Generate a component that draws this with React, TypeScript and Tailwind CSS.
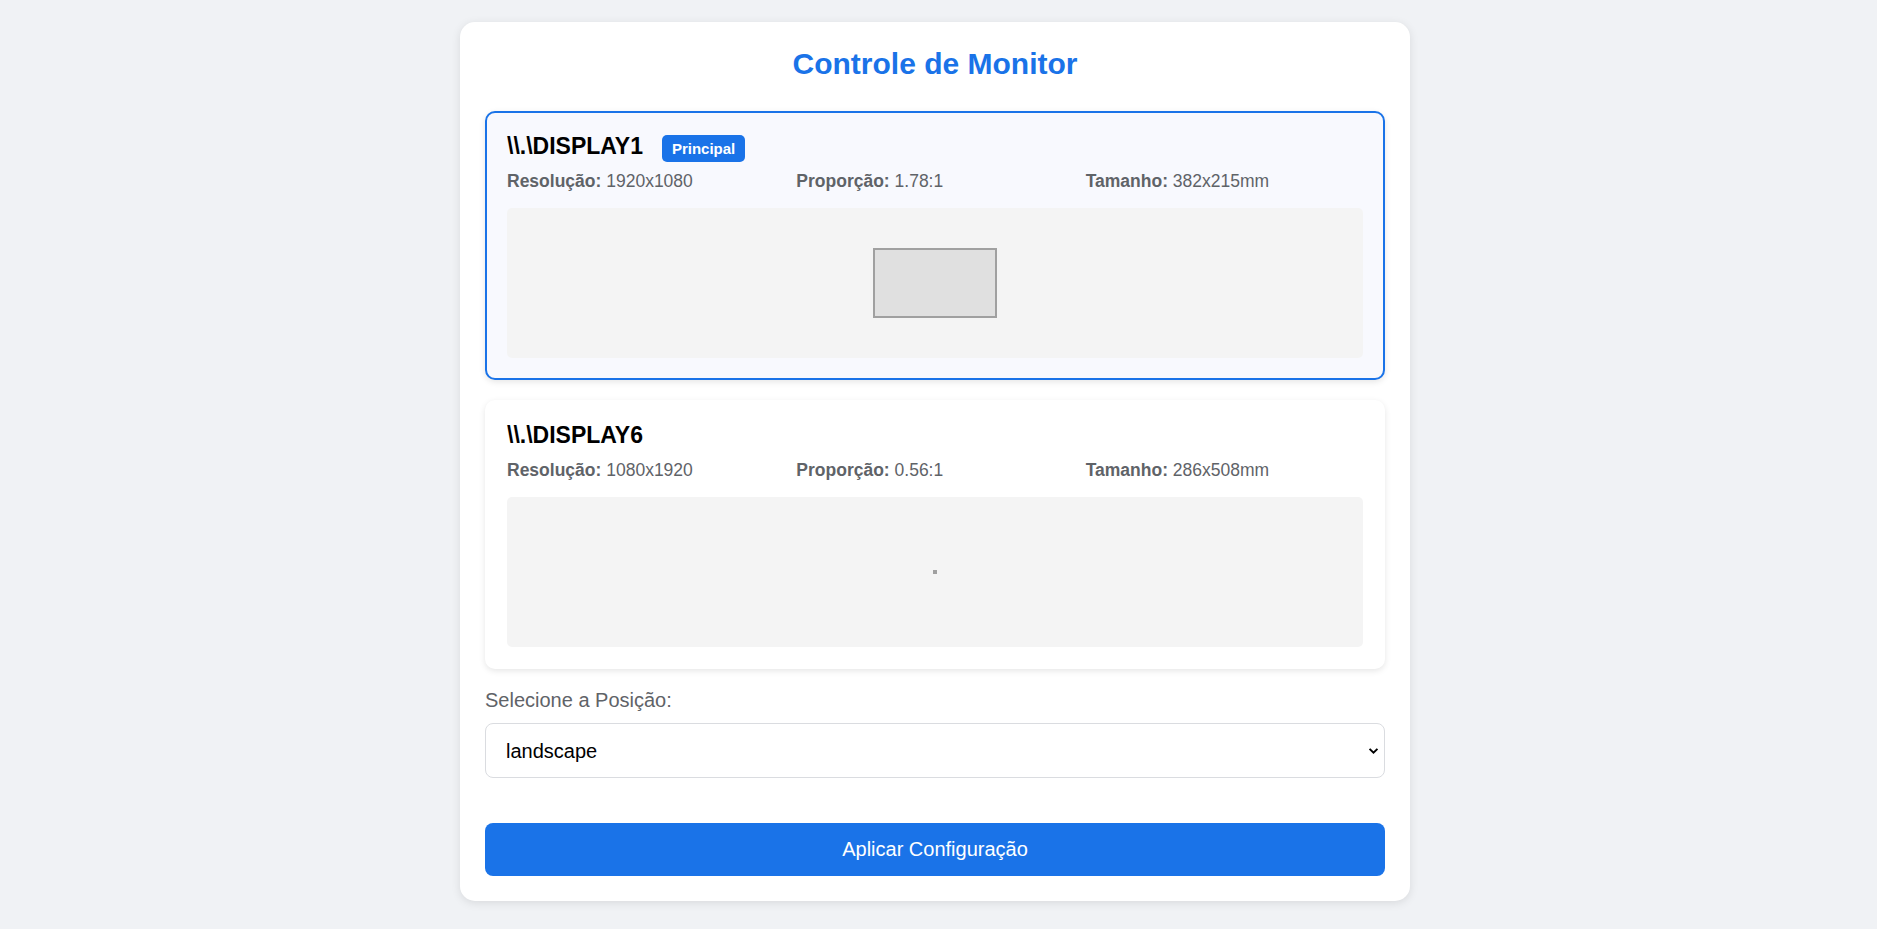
import { useState } from "react";

interface Monitor {
  name: string;
  width: number;
  height: number;
  ratio: string;
  size: string;
  primary?: boolean;
}

const monitors: Monitor[] = [
  { name: "\\\\.\\DISPLAY1", width: 1920, height: 1080, ratio: "1.78:1", size: "382x215mm", primary: true },
  { name: "\\\\.\\DISPLAY6", width: 1080, height: 1920, ratio: "0.56:1", size: "286x508mm" },
];

function MonitorCard({ m, selected, onSelect }: { m: Monitor; selected: boolean; onSelect: () => void }) {
  return (
    <div
      onClick={onSelect}
      className={
        selected
          ? "cursor-pointer rounded-[10px] border-2 border-[#1a73e8] bg-[#f8f9fe] p-[20px] shadow-[0_2px_6px_rgba(0,0,0,0.1)]"
          : "cursor-pointer rounded-[10px] border-2 border-transparent bg-white p-[20px] shadow-[0_2px_6px_rgba(0,0,0,0.1)]"
      }
    >
      <div className="mb-[10px] flex h-[28px] items-baseline">
        <h3 className="text-[23px] font-bold text-black">{m.name}</h3>
        {m.primary && (
          <span className="ml-[19px] rounded-[5px] bg-[#1a73e8] px-[10px] py-[5px] text-[15px] font-bold text-white">
            Principal
          </span>
        )}
      </div>
      <div className="grid grid-cols-3 gap-[12px] text-[17.5px] text-[#5f6368]">
        <div>
          <span className="font-bold">Resolução:</span> {m.width}x{m.height}
        </div>
        <div>
          <span className="font-bold">Proporção:</span> {m.ratio}
        </div>
        <div>
          <span className="font-bold">Tamanho:</span> {m.size}
        </div>
      </div>
      <div className="mt-[16px] flex h-[150px] items-center justify-center rounded-[5px] bg-[#f4f4f4]">
        {m.width > m.height ? (
          <div className="h-[70px] w-[124px] border-2 border-[#a0a0a0] bg-[#e0e0e0]" />
        ) : (
          <div className="h-[4px] w-[4px] bg-[#a0a0a0]" />
        )}
      </div>
    </div>
  );
}

export default function App() {
  const [selected, setSelected] = useState(0);
  const [position, setPosition] = useState("landscape");

  return (
    <div className="min-h-screen bg-[#f0f2f5] pt-[22px] pr-[7px] pb-[30px] font-['Liberation_Sans',Arial,sans-serif] leading-[normal]">
      <div className="mx-auto w-[950px] rounded-[15px] bg-white p-[25px] shadow-[0_2px_10px_rgba(0,0,0,0.1)]">
        <h1 className="mb-[30px] text-center text-[30px] font-bold text-[#1a73e8]">Controle de Monitor</h1>

        <div className="flex flex-col gap-[20px]">
          {monitors.map((m, i) => (
            <MonitorCard key={m.name} m={m} selected={selected === i} onSelect={() => setSelected(i)} />
          ))}
        </div>

        <label className="mt-[20px] mb-[11px] block text-[20px] text-[#5f6368]">Selecione a Posição:</label>
        <div className="relative">
          <select
            value={position}
            onChange={(e) => setPosition(e.target.value)}
            className="h-[55px] w-full appearance-none rounded-[8px] border border-[#dadce0] bg-white px-[20px] text-[20px] text-black outline-none"
          >
            <option value="landscape">landscape</option>
            <option value="portrait">portrait</option>
            <option value="landscape_flipped">landscape (flipped)</option>
            <option value="portrait_flipped">portrait (flipped)</option>
          </select>
          <svg
            viewBox="0 0 12 8"
            className="pointer-events-none absolute right-[6px] top-1/2 h-[7px] w-[11px] -translate-y-1/2"
            aria-hidden
          >
            <path d="M1.5 1.5 6 6l4.5-4.5" fill="none" stroke="black" strokeWidth="2.2" />
          </svg>
        </div>

        <button
          type="button"
          className="mt-[45px] h-[53px] w-full rounded-[8px] bg-[#1a73e8] text-[20px] text-white"
        >
          Aplicar Configuração
        </button>
      </div>
    </div>
  );
}
